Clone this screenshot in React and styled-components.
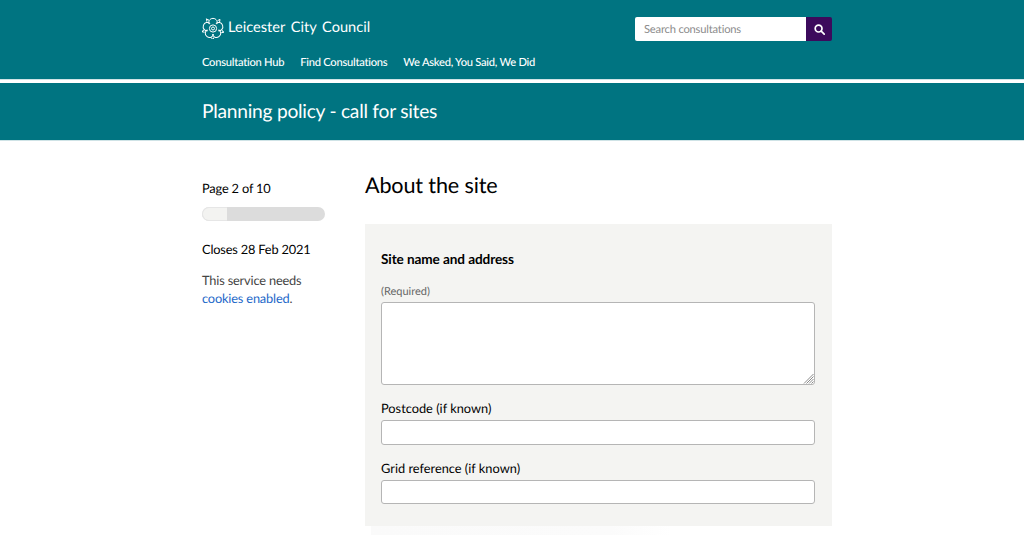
import React from 'react';
import styled, { createGlobalStyle } from 'styled-components';

const GlobalStyle = createGlobalStyle`
  html, body {
    margin: 0;
    padding: 0;
    background: #ffffff;
    overflow: hidden;
  }
  body {
    font-family: Lato, "Open Sans", sans-serif;
    color: #000000;
    text-rendering: geometricPrecision;
  }
  input, textarea, button {
    text-rendering: geometricPrecision;
  }
`;

const Wrap = styled.div`
  width: 630px;
  margin-left: 202px;
`;

const Header = styled.header`
  background: #007481;
  height: 79px;
  border-bottom: 1px solid #cfe3e6;
`;

const HeaderTop = styled.div`
  display: flex;
  justify-content: space-between;
  align-items: flex-start;
  padding-top: 17px;
  height: 24px;
`;

const Logo = styled.div`
  display: flex;
  align-items: center;
  gap: 4px;
  color: #ffffff;
  font-size: 14.6px;
  line-height: 20px;
  word-spacing: 2px;
`;

const Search = styled.form`
  display: flex;
  width: 197px;
  height: 24px;
`;

const SearchInput = styled.input`
  flex: 1;
  min-width: 0;
  box-sizing: border-box;
  border: 0;
  border-radius: 2px 0 0 2px;
  padding: 0 9px;
  font-family: inherit;
  font-size: 11.2px;
  letter-spacing: -0.2px;
  background: #ffffff;
  &::placeholder {
    color: #8c8c8c;
    opacity: 1;
  }
`;

const SearchButton = styled.button`
  width: 26px;
  border: 0;
  padding: 0;
  background: #3c0a5c;
  border-radius: 0 2px 2px 0;
  display: flex;
  align-items: center;
  justify-content: center;
`;

const Nav = styled.nav`
  display: flex;
  gap: 16px;
  margin-top: 14px;
`;

const NavLink = styled.a`
  color: #ffffff;
  font-size: 11.2px;
  letter-spacing: -0.27px;
  line-height: 16px;
  font-weight: 500;
  text-decoration: none;
`;

const TitleBand = styled.div`
  background: #007481;
  margin-top: 3px;
  height: 58px;
  display: flex;
  align-items: center;
  box-sizing: border-box;
  border-bottom: 1px solid #cfe3e6;
`;

const PageTitle = styled.h1`
  margin: 0;
  color: #ffffff;
  font-size: 19.2px;
  letter-spacing: -0.25px;
  font-weight: 400;
  line-height: 26px;
`;

const Columns = styled(Wrap)`
  display: grid;
  grid-template-columns: 123px 467px;
  column-gap: 40px;
  padding-top: 30px;
`;

const Side = styled.aside`
  padding-top: 8px;
`;

const SideText = styled.p`
  margin: 0;
  font-size: 12.8px;
  letter-spacing: -0.17px;
  line-height: 18px;
  color: ${p => (p.$muted ? '#444444' : '#000000')};
`;

const Progress = styled.div`
  height: 14px;
  margin: 10px 0 19px;
  border-radius: 7px;
  background: #dcdcdc;
  overflow: hidden;
`;

const ProgressFill = styled.div`
  height: 100%;
  box-sizing: border-box;
  background: #f3f3f1;
  border: 1px solid #e6e6e6;
  border-right: 0;
  border-radius: 7px 0 0 7px;
`;

const CookieNote = styled(SideText)`
  margin-top: 13px;
`;

const TextLink = styled.a`
  color: #1d68c9;
  text-decoration: none;
`;

const Main = styled.main`
  min-width: 0;
`;

const SectionTitle = styled.h2`
  margin: 0;
  font-size: 21.6px;
  letter-spacing: -0.15px;
  font-weight: 400;
  line-height: 28px;
`;

const Panel = styled.section`
  margin-top: 25px;
  background: #f4f4f2;
  padding: 26px 17px 22px 16px;
  height: 302px;
  box-sizing: border-box;
`;

const Legend = styled.div`
  font-size: 13.6px;
  letter-spacing: -0.1px;
  font-weight: 700;
  line-height: 18px;
`;

const Required = styled.div`
  margin-top: 17px;
  font-size: 11px;
  line-height: 14px;
  color: #666666;
`;

const Label = styled.label`
  display: block;
  margin-top: 15px;
  font-size: 12.8px;
  line-height: 17px;
`;

const TextAreaBox = styled.div`
  position: relative;
  margin-top: 3px;
`;

const TextArea = styled.textarea`
  display: block;
  box-sizing: border-box;
  width: 100%;
  height: 83px;
  border: 1px solid #b5b5b5;
  border-radius: 3px;
  background: #ffffff;
  resize: none;
`;

const Grip = styled.svg`
  position: absolute;
  right: 1px;
  bottom: 1px;
`;

const TextInput = styled.input`
  display: block;
  box-sizing: border-box;
  width: 100%;
  height: 24.5px;
  margin-top: 3px;
  border: 1px solid #b5b5b5;
  border-radius: 3px;
  background: #ffffff;
`;

const PageFade = styled.div`
  height: 9px;
  width: 300px;
  margin-left: 6px;
  background: linear-gradient(90deg, #fafafa, #fbfbfb 80%, #ffffff);
`;

const RoseIcon = () => (
  <svg width="22" height="22" viewBox="0 0 22 22" fill="none" stroke="#ffffff" strokeWidth="1">
    {[0, 72, 144, 216, 288].map(angle => (
      <g key={angle} transform={`rotate(${angle} 11 11.5)`}>
        <path d="M7.2 7.2C6 4.6 7.6 1.4 11 1.4s5 3.2 3.8 5.8" />
        <path d="M15.6 3.6l2.4-1.2-.4 2.6" />
      </g>
    ))}
    <circle cx="11" cy="11.5" r="3.6" />
    <circle cx="11" cy="11.5" r="1.5" />
  </svg>
);

const SearchIcon = () => (
  <svg width="11" height="11" viewBox="0 0 11 11" fill="none" stroke="#ffffff" strokeWidth="1.7">
    <circle cx="4.6" cy="4.6" r="3.4" />
    <path d="M7.2 7.2l3 3" strokeLinecap="round" />
  </svg>
);

const ResizeGrip = () => (
  <Grip width="11" height="11" viewBox="0 0 11 11" stroke="#8a8a8a" strokeWidth="1">
    <path d="M10.5 1L1 10.5M10.5 3.5L3.5 10.5M10.5 6L6 10.5M10.5 8.5L8.5 10.5" />
  </Grip>
);

const App = () => {
  return (
    <>
      <GlobalStyle />
      <Header>
        <Wrap>
          <HeaderTop>
            <Logo>
              <RoseIcon />
              Leicester City Council
            </Logo>
            <Search onSubmit={e => e.preventDefault()}>
              <SearchInput placeholder="Search consultations" />
              <SearchButton aria-label="Search">
                <SearchIcon />
              </SearchButton>
            </Search>
          </HeaderTop>
          <Nav>
            <NavLink href="#">Consultation Hub</NavLink>
            <NavLink href="#">Find Consultations</NavLink>
            <NavLink href="#">We Asked, You Said, We Did</NavLink>
          </Nav>
        </Wrap>
      </Header>
      <TitleBand>
        <Wrap>
          <PageTitle>Planning policy - call for sites</PageTitle>
        </Wrap>
      </TitleBand>
      <Columns>
        <Side>
          <SideText>Page 2 of 10</SideText>
          <Progress>
            <ProgressFill style={{ width: `${(2 / 10) * 100}%` }} />
          </Progress>
          <SideText>Closes 28 Feb 2021</SideText>
          <CookieNote $muted>
            This service needs <TextLink href="#">cookies enabled</TextLink>.
          </CookieNote>
        </Side>
        <Main>
          <SectionTitle>About the site</SectionTitle>
          <Panel>
            <Legend>Site name and address</Legend>
            <Required>(Required)</Required>
            <TextAreaBox>
              <TextArea />
              <ResizeGrip />
            </TextAreaBox>
            <Label>Postcode (if known)</Label>
            <TextInput />
            <Label>Grid reference (if known)</Label>
            <TextInput />
          </Panel>
          <PageFade />
        </Main>
      </Columns>
    </>
  );
};

export default App;
